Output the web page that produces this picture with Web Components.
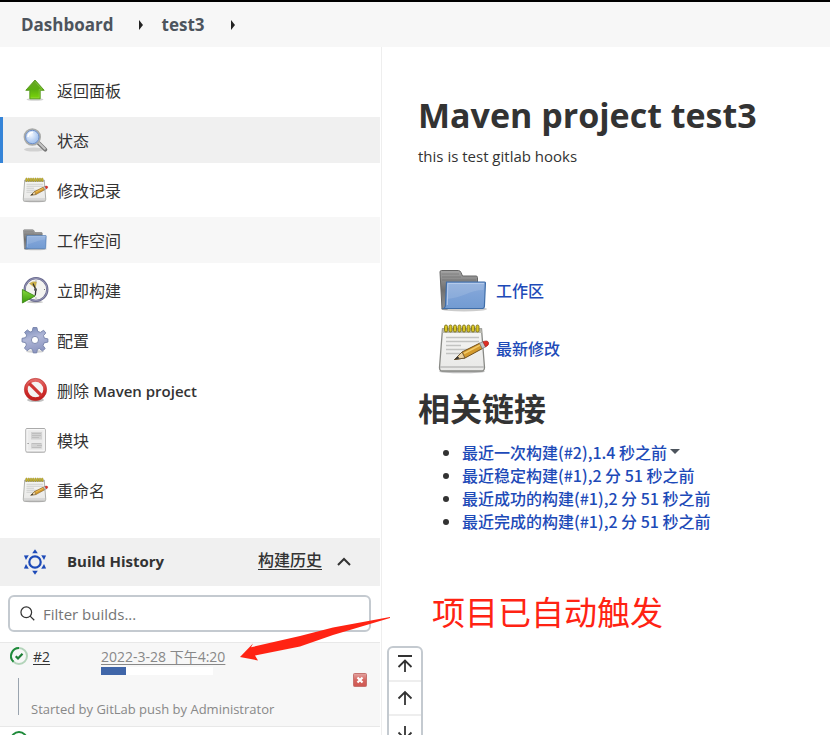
<!DOCTYPE html>
<html lang="zh-CN">
<head>
<meta charset="utf-8">
<meta name="viewport" content="width=device-width, initial-scale=1">
<title>test3 [Jenkins]</title>
<style>
html, body { margin: 0; height: 100%; }
body { overflow: hidden; background: #fff; color: #333; font: 16px/22px "Open Sans", "Noto Sans CJK SC", sans-serif; }
</style>
</head>
<body>
<jenkins-page></jenkins-page>
<script>
const define = (name, html, setup) => {
  const template = document.createElement('template');
  template.innerHTML = html;
  customElements.define(name, class extends HTMLElement {
    connectedCallback() {
      if (this.shadowRoot) return;
      this.attachShadow({ mode: 'open' }).append(template.content.cloneNode(true));
      if (setup) setup(this, this.shadowRoot);
    }
  });
};

const ICONS = {
  up: ['0 0 24 24', `<defs><linearGradient id="g" x2="0" y2="1"><stop stop-color="#6aa52a"/><stop offset=".5" stop-color="#5cae10"/><stop offset="1" stop-color="#7cd80a"/></linearGradient></defs>
    <ellipse cx="12" cy="21.5" rx="8.500" ry="1.300" fill="#000" opacity=".18"/>
    <path d="M12 2 21.200 12.300H17.200V20.800H6.800V12.300H2.800Z" fill="url(#g)" stroke="#56981c" stroke-width=".9" stroke-linejoin="round"/>
    <path d="M12 3.500 19 11.300H16.200V19.700H7.800" fill="none" stroke="#a4dc58" stroke-width=".6" opacity=".7"/>`],
  search: ['0 0 24 24', `<defs><radialGradient id="g" cx=".4" cy=".35"><stop stop-color="#f4f8ff"/><stop offset="1" stop-color="#a9c6ef"/></radialGradient></defs>
    <ellipse cx="11" cy="21.500" rx="10" ry="2" fill="#000" opacity=".13"/>
    <path d="M15.500 15 22.300 21.700" stroke="#777" stroke-width="4" stroke-linecap="round"/><path d="M16 15 21.800 20.700" stroke="#c6c6c6" stroke-width="2" stroke-linecap="round"/>
    <circle cx="9.300" cy="9" r="7.800" fill="url(#g)" stroke="#a9aaa8" stroke-width="1.800"/><circle cx="9.300" cy="9" r="6.700" fill="none" stroke="#6d8fc8" stroke-width="1"/>
    <path d="M5 9A4.500 4.500 0 0 1 10 4.500" fill="none" stroke="#fff" stroke-width="1.500"/>`],
  notepad: ['0 0 48 48', `<defs><linearGradient id="g" x2="0" y2="1"><stop stop-color="#f6f6f4"/><stop offset="1" stop-color="#e8e8e7"/></linearGradient></defs>
    <ellipse cx="23" cy="46.500" rx="23" ry="1.800" fill="#000" opacity=".25"/>
    <path d="M3.500 4H42.500L45.500 42.500Q45.500 46 42.500 46H3Q.500 46 .500 42.500Z" fill="url(#g)" stroke="#888985" stroke-width="1.300"/>
    <path d="M3.500 4H42.500L43 8H3.200Z" fill="#b8b8ae"/><path d="M1 42H45" stroke="#bbb" stroke-width="1.500"/>
    <path d="M7 12.500H40M7 16.500H40M7 20.500H22M7 24.500H29M7 28.500H21" stroke="#c2c3c1" stroke-width="1.500"/>
    <g fill="#d8c522" stroke="#7f731b" stroke-width=".9"><rect x="5.500" y="0" width="3" height="7" rx="1.500"/><rect x="10" y="0" width="3" height="7" rx="1.500"/><rect x="14.500" y="0" width="3" height="7" rx="1.500"/><rect x="19" y="0" width="3" height="7" rx="1.500"/><rect x="23.500" y="0" width="3" height="7" rx="1.500"/><rect x="28" y="0" width="3" height="7" rx="1.500"/><rect x="32.500" y="0" width="3" height="7" rx="1.500"/><rect x="37" y="0" width="3" height="7" rx="1.500"/></g>
    <path d="M15.500 34.500 23 27 41 18 43.500 23.500 26 33Z" fill="#d49a2c" stroke="#72501c" stroke-width="1"/>
    <path d="M15.500 34.500 23 27 26 33Z" fill="#ead1a0" stroke="#5e4a2c" stroke-width=".8"/><path d="M15.500 34.500 18.800 31.200 20.500 33.600Z" fill="#333"/>
    <path d="M25 28.500 41 20.200" stroke="#f3cb6a" stroke-width="1.500"/>
    <path d="M40.500 18.300 44 16.700 46.600 21.900 43.200 23.500Z" fill="#c6c6c6" stroke="#777" stroke-width=".7"/>
    <path d="M44 16.700Q48.500 15 49.500 17.500T46.600 21.900Z" fill="#e02e25" stroke="#a32823" stroke-width=".7"/>`],
  folder: ['0 0 48 48', `<defs><linearGradient id="g" x2="0" y2="1"><stop stop-color="#8cacdb"/><stop offset=".5" stop-color="#7da2d7"/><stop offset="1" stop-color="#729bd2"/></linearGradient><linearGradient id="h" x2="0" y2="1"><stop stop-color="#a4a4a4"/><stop offset=".5" stop-color="#707070"/><stop offset="1" stop-color="#929292"/></linearGradient></defs>
    <ellipse cx="25" cy="42" rx="23" ry="2.500" fill="#000" opacity=".2"/>
    <path d="M1 5Q1 3.500 2.500 3.500H19.500Q21 3.500 22 5.500L23.500 9H37Q38.500 9 38.500 10.500V30L8 42H3Z" fill="url(#h)" stroke="#666" stroke-width="1"/>
    <path d="M2.500 7H20M3 10H22M3 13H37" stroke="#555" opacity=".35"/>
    <path d="M7.500 15H45.500Q46.500 15 46.400 16.500L45.400 39.500Q45.300 41.500 43.500 41.500H4.800Q6.500 40.500 6.500 38Z" fill="url(#g)" stroke="#3f6da8" stroke-width="1.200"/>
    <path d="M8.500 16.300H45L44.500 23C31 23 23 31 7.800 32Z" fill="#fff" opacity=".12"/><path d="M8.300 38 8.800 16.500H45" fill="none" stroke="#b4caeb" stroke-width="1"/>`],
  build: ['0 0 24 24', `<defs><linearGradient id="g" x2="0" y2="1"><stop stop-color="#87da3c"/><stop offset="1" stop-color="#39980c"/></linearGradient></defs>
    <ellipse cx="12" cy="24" rx="8" ry="1.200" fill="#000" opacity=".25"/><circle cx="13" cy="11.500" r="11.300" fill="#f3f3f0" stroke="#66678c" stroke-width="2.300"/><circle cx="13" cy="11.500" r="11.200" fill="none" stroke="#a8a8c5" stroke-width=".7"/>
    <path d="M6.500 5.500Q9.500 2.800 13.500 4L12.300 10Z" fill="#d1b64a" stroke="#a8903c" stroke-width=".4"/><path d="M10 5.500 12.800 11.500 12.300 17.500" fill="none" stroke="#333" stroke-width="1.300"/><circle cx="12.500" cy="11.500" r="1.500" fill="#555"/><path d="M13 2.500V3.500M13 19.500V20.500M21 11.500H22" stroke="#777"/>
    <path d="M-.6 11.500 12 18-.6 25Z" fill="url(#g)" stroke="#35820c" stroke-width=".8"/>`],
  gear: ['0 0 24 24', `<defs><linearGradient id="g" x2=".3" y2="1"><stop stop-color="#7385b5"/><stop offset=".5" stop-color="#b0b7d7"/><stop offset="1" stop-color="#8f98c2"/></linearGradient></defs><ellipse cx="12" cy="23.500" rx="9" ry="1.500" fill="#000" opacity=".17"/>
    <path transform="translate(-1 -1) scale(1.08)" fill="url(#g)" stroke="#737fa7" stroke-width=".8" fill-rule="evenodd" d="M10.200.5H13.800L14.500 4 17 5 20 3 22 5.500 19.900 8 20.700 10.300 24 11V14L20.500 14.700 19.500 17.200 21.500 20 19 22.200 16 19.900 14.300 20.700 13.600 24H10.400L9.700 20.700 7.500 19.900 4.700 22 2.300 19.500 4.100 16.700 3.300 14.500 0 13.800V10.500L3.400 9.800 4.300 7.500 2.400 5 5 2.700 7.500 4.700 9.500 4ZM15.300 12A3.300 3.300 0 1 0 8.700 12 3.300 3.300 0 0 0 15.300 12Z"/>`],
  stop: ['0 0 24 24', `<defs><linearGradient id="g" x2="0" y2="1"><stop stop-color="#e56a68"/><stop offset=".6" stop-color="#cf2d2b"/><stop offset="1" stop-color="#c21f1e"/></linearGradient></defs><ellipse cx="12.500" cy="22" rx="8.500" ry="2" fill="#000" opacity=".25"/>
    <circle cx="12.500" cy="11.500" r="9.500" fill="#f4f3f2" stroke="url(#g)" stroke-width="3.400"/><path d="M6.200 5.300 18.800 17.800" stroke="#cf3432" stroke-width="3.200"/><circle cx="12.500" cy="11.500" r="11.100" fill="none" stroke="#b62d2b" stroke-width=".6"/>`],
  module: ['0 0 24 24', `<ellipse cx="12.500" cy="24" rx="10" ry="1" fill="#000" opacity=".2"/><rect x="2.800" y=".5" width="19.500" height="23.500" rx="1.200" fill="#ebebeb" stroke="#aaa"/><rect x="4" y="1.600" width="17.200" height="21.200" fill="none" stroke="#fafafa"/>
    <rect x="8" y="4" width="11" height="7.500" fill="#d2d2d2"/><rect x="8" y="15" width="11" height="5.500" fill="#d2d2d2"/><path d="M9 5.500H18M9 7.500H18M9 9.500H16M9 15.500H18M14 17.500H19M9 19.500H18" stroke="#b9b9b9" stroke-width=".8"/><path d="M4.500 15.500H5.700" stroke="#888"/>`],
  history: ['0 0 24 24', `<g fill="#1d4ab8"><circle cx="12" cy="12" r="5.700" fill="none" stroke="#1d4ab8" stroke-width="2.200"/><path id="t" d="M12-.8 14.800 3.200H9.200Z"/><use href="#t" transform="rotate(60 12 12)"/><use href="#t" transform="rotate(120 12 12)"/><use href="#t" transform="rotate(180 12 12)"/><use href="#t" transform="rotate(240 12 12)"/><use href="#t" transform="rotate(300 12 12)"/></g>`],
  chevron: ['0 0 16 16', `<path d="M2 11 8 5 14 11" fill="none" stroke="#333" stroke-width="2"/>`],
  lens: ['0 0 16 16', `<circle cx="6.700" cy="6.700" r="5.700" fill="none" stroke="#333" stroke-width="1.300"/><path d="M10.800 10.800 15.200 15.200" stroke="#333" stroke-width="1.300"/>`],
  success: ['0 0 20 20', `<circle cx="10" cy="10" r="8" fill="none" stroke="#b3d4ba" stroke-width="2"/><path d="M4.500 15.800A8 8 0 0 1 10 2" fill="none" stroke="#1e8a3a" stroke-width="2"/><path d="M6.700 10.200 9 12.400 13.500 7.800" fill="none" stroke="#1e7e36" stroke-width="2.200"/>`],
  done: ['0 0 20 20', `<circle cx="10" cy="10" r="8" fill="none" stroke="#1e8a3a" stroke-width="2"/><path d="M6.700 10.200 9 12.400 13.500 7.800" fill="none" stroke="#1e7e36" stroke-width="2.200"/>`],
  cancel: ['0 0 16 16', `<defs><linearGradient id="g" x2="0" y2="1"><stop stop-color="#e4a6a3"/><stop offset=".5" stop-color="#d56660"/><stop offset="1" stop-color="#cf5751"/></linearGradient></defs><rect x="1.500" y="1.500" width="13" height="13" rx="1" fill="url(#g)" stroke="#c67470"/><path d="M5.500 5.500 10.500 10.500M10.500 5.500 5.500 10.500" stroke="#fff" stroke-width="2.200"/>`],
  top: ['0 0 16 20', `<path d="M1 2H15M8 18V7M1.500 13 8 6.500 14.500 13" fill="none" stroke="#333" stroke-width="1.800"/>`],
  arrowup: ['0 0 16 20', `<path d="M8 17V4M1.500 10.500 8 4 14.500 10.500" fill="none" stroke="#333" stroke-width="1.800"/>`],
  arrowdown: ['0 0 16 20', `<path d="M8 4V17M1.500 10.500 8 17 14.500 10.500" fill="none" stroke="#333" stroke-width="1.800"/>`],
  crumb: ['0 0 6 10', `<path d="M1 0 5 5 1 10Z" fill="#222"/>`],
  caret: ['0 0 10 6', `<path d="M0 0H10L5 5Z" fill="#4d545d"/>`]
};

define('ui-icon', `<style>:host{display:inline-block;flex:none}svg{display:block;width:100%;height:100%;overflow:visible}</style>`, (host, root) => {
  const [box, body] = ICONS[host.getAttribute('name')];
  root.innerHTML += `<svg viewBox="${box}" aria-hidden="true">${body}</svg>`;
});

define('bread-crumbs', `<style>
  :host{display:block;flex:none;background:#f7f7f7;border-top:2px solid #000}
  nav{display:flex;align-items:center;height:45px;padding:0 21px;font-size:17px;font-weight:700}
  a{color:#4d545d;text-decoration:none}
  ui-icon{width:6px;height:10px}
  .first{margin:0 18px 0 24px}.last{margin-left:25px}
</style>
<nav><a href="#">Dashboard</a><ui-icon class="first" name="crumb"></ui-icon><a href="#">test3</a><ui-icon class="last" name="crumb"></ui-icon></nav>`);

define('side-task', `<style>
  :host{display:block}
  a{display:flex;align-items:center;gap:10px;box-sizing:border-box;height:46px;padding-left:20px;border-left:3px solid transparent;color:#333;text-decoration:none}
  :host([state=active]) a{background:#f0f0f0;border-color:#3584d8}
  :host([state=hover]) a{background:#f7f7f7;border-color:#f7f7f7}
  ui-icon{width:24px;height:24px}
  span{padding-top:2px}
  ::slotted(b){font-size:15px;font-weight:600}
</style><a href="#"><span><slot></slot></span></a>`, (host, root) => {
  const icon = document.createElement('ui-icon');
  icon.setAttribute('name', host.getAttribute('icon'));
  root.querySelector('a').prepend(icon);
});

define('build-row', `<style>
  :host{display:block;background:#f7f7f7;border-top:1px solid #e8e8e8}
  .row{display:grid;grid-template-columns:18px 68px 1fr;align-items:start;align-content:start;padding:3px 10px 0;height:80px}
  .icon{width:20px;height:20px;margin-left:-1px}
  a{color:#333;text-decoration:underline;text-underline-offset:2px;font-size:14px;line-height:20px;padding-top:1px}
  .num{padding-left:5px}
  .date{display:block;width:fit-content;color:#888}
  progress{appearance:none;display:block;width:112px;height:8px;border:0;background:#fff}
  progress::-webkit-progress-bar{background:#fff}
  progress::-webkit-progress-value{background:#4066a9}
  .info{grid-column:1/-1;display:flex;align-items:flex-end;height:46px;gap:12px}
  .line{width:1px;height:37px;background:#9aa4af;margin:0 0 6px 8px}
  .cause{padding-bottom:2px;font-size:13px;line-height:20px;color:#888;flex:1}
  button{align-self:flex-start;border:0;background:none;padding:0;width:16px;height:16px;margin:-3px 2px 0}
  button ui-icon{width:16px;height:16px;display:block}
  .when{padding-left:5px}
</style>
<div class="row"><ui-icon class="icon" name="success"></ui-icon><a class="num" href="#">#2</a>
<div class="when"><a class="date" href="#">2022-3-28 下午4:20</a><progress max="112" value="25" aria-label="构建进度"></progress></div>
<div class="info"><span class="line"></span><span class="cause">Started by GitLab push by Administrator</span><button aria-label="取消"><ui-icon name="cancel"></ui-icon></button></div></div>`);

define('build-history', `<style>
  :host{display:block;position:relative}
  header{display:flex;align-items:center;height:48px;padding:0 28px 0 23px;background:#f0f0f0}
  h2{margin:0 auto 0 20px;padding-bottom:2px;font-size:15px;line-height:22px;font-weight:700}
  header>ui-icon{width:24px;height:24px}
  header a{padding-bottom:4px;color:#333;font-weight:500;text-underline-offset:3px}
  button{border:0;background:none;padding:0;margin-left:14px;width:16px;height:16px}
  button ui-icon{width:16px;height:16px;display:block}
  label{display:flex;align-items:center;gap:8px;box-sizing:border-box;height:37px;margin:9px 9px 10px 8px;padding:0 10px;border:2px solid #c4cad0;border-radius:6px}
  label ui-icon{width:15px;height:15px}
  input{flex:1;min-width:0;border:0;outline:0;padding:0;background:none;color:#333;font:inherit;font-size:15px}
  input::placeholder{color:#757575}
  .next{border-top:1px solid #e8e8e8;padding:3px 9px;background:#fff}
  .next ui-icon{width:20px;height:20px}
  .pointer{position:absolute;left:239px;top:78px;width:152px;height:46px;overflow:visible}
</style>
<header><ui-icon name="history"></ui-icon><h2>Build History</h2><a href="#">构建历史</a><button aria-label="收起"><ui-icon name="chevron"></ui-icon></button></header>
<label><ui-icon name="lens"></ui-icon><input type="text" placeholder="Filter builds..." aria-label="Filter builds"></label>
<build-row></build-row>
<div class="next"><ui-icon name="done"></ui-icon></div>
<svg class="pointer" viewBox="0 0 152 46" aria-hidden="true"><path d="M1 41 14 27.500 12 31.300 61 20 94 11.500 151 1V2L94 19 61 30.500 16 39.500 19 44.500Z" fill="#ff2313"/></svg>`);

define('side-panel', `<style>
  :host{display:block;flex:0 0 381px;border-right:1px solid #eee;padding-top:20px}
  .tasks{display:grid;gap:4px;margin:0 1px 25px 0}
  build-history{margin-right:1px}
</style>
<nav class="tasks"><side-task icon="up">返回面板</side-task><side-task icon="search" state="active">状态</side-task><side-task icon="notepad">修改记录</side-task><side-task icon="folder" state="hover">工作空间</side-task><side-task icon="build">立即构建</side-task><side-task icon="gear">配置</side-task><side-task icon="stop">删除 <b>Maven project</b></side-task><side-task icon="module">模块</side-task><side-task icon="notepad">重命名</side-task></nav>
<build-history></build-history>`);

define('project-main', `<style>
  :host{display:block;flex:1;min-width:0;padding:44px 36px 0}
  h1{margin:0;font-size:34px;line-height:48px;font-weight:700}
  p{margin:6px 0 0;font-size:15px;line-height:22px}
  .shortcuts{display:grid;gap:8px;margin:99px 0 0 21px;justify-items:start}
  a{color:#1d4ab8;text-decoration:none;font-weight:500}
  .shortcuts a{display:flex;align-items:center;gap:9px;height:50px}
  .shortcuts ui-icon{width:48px;height:48px}
  h2{margin:14px 0 11px;font-size:32px;line-height:42px;font-weight:700}
  ul{margin:0;padding-left:44px;font-family:"Noto Sans CJK SC",sans-serif}
  li{line-height:23px}
  li ui-icon{width:10px;height:6px;margin-left:3px;vertical-align:4px}
  .note{margin:56px 0 0 14px;font-size:33px;line-height:48px;color:#ff2313}
</style>
<h1>Maven project test3</h1><p>this is test gitlab hooks</p>
<div class="shortcuts"><a href="#"><ui-icon name="folder"></ui-icon>工作区</a><a href="#"><ui-icon name="notepad"></ui-icon>最新修改</a></div>
<h2>相关链接</h2>
<ul><li><a href="#">最近一次构建(#2),1.4 秒之前</a><ui-icon name="caret"></ui-icon></li><li><a href="#">最近稳定构建(#1),2 分 51 秒之前</a></li><li><a href="#">最近成功的构建(#1),2 分 51 秒之前</a></li><li><a href="#">最近完成的构建(#1),2 分 51 秒之前</a></li></ul>
<div class="note">项目已自动触发</div>`);

define('page-controls', `<style>
  :host{display:block;position:absolute;left:387px;top:646px;box-sizing:border-box;width:36px;border:2px solid #c4cad0;border-radius:6px;background:#fff;overflow:hidden}
  button{display:grid;place-items:center;width:100%;height:34px;padding:0;border:0;border-bottom:2px solid #eee;background:none}
  ui-icon{width:16px;height:20px}
</style>
<button aria-label="最新"><ui-icon name="top"></ui-icon></button><button aria-label="上一页"><ui-icon name="arrowup"></ui-icon></button><button aria-label="下一页"><ui-icon name="arrowdown"></ui-icon></button>`);

define('jenkins-page', `<style>
  :host{display:flex;flex-direction:column;position:relative;height:100%;overflow:hidden}
  .body{display:flex;flex:1;min-height:0}
</style>
<bread-crumbs></bread-crumbs><div class="body"><side-panel></side-panel><project-main></project-main></div><page-controls></page-controls>`);
</script>
</body>
</html>
